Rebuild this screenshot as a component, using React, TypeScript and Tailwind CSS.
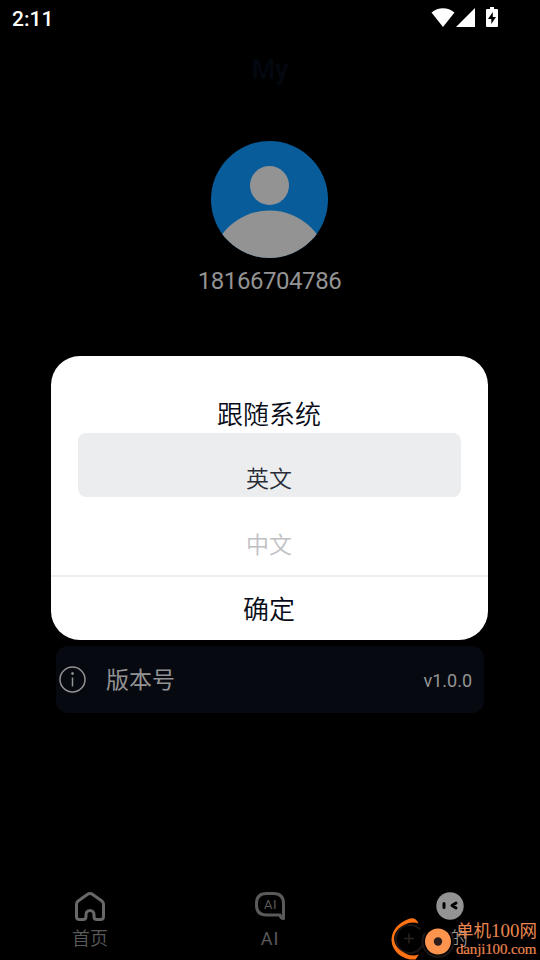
import { useState } from 'react'

const languages = [
  { label: '跟随系统', className: 'h-[65px] text-[26px] text-[#080c18]' },
  { label: '英文', className: 'h-[66px] text-[23px] text-[#292d38]' },
  { label: '中文', className: 'h-[65px] text-[23px] text-[#bfc0c3]' },
]

function StatusBar() {
  return (
    <header className="flex h-9 shrink-0 items-center justify-between pl-3 pr-[42px] text-white">
      <span className="pt-0.5 text-[21px] font-medium leading-6">2:11</span>
      <div className="flex items-center">
        <svg width="24" height="20" viewBox="0 0 24 20" fill="currentColor">
          <path d="M.5 4.500C7-1.200 17-1.200 23.500 4.500L12 19Z" />
        </svg>
        <svg className="ml-px" width="20" height="20" viewBox="0 0 20 20" fill="currentColor">
          <path d="M19 0v19H0Z" />
        </svg>
        <svg className="-mt-0.5 ml-[10px]" width="12" height="20" viewBox="0 0 12 20" fill="currentColor">
          <path d="M4 0h4v2h3q1 0 1 1v16q0 1-1 1H1q-1 0-1-1V3q0-1 1-1h3Z" />
          <path fill="#000" d="M6.800 5v5H10l-4.700 7v-5H2Z" />
        </svg>
      </div>
    </header>
  )
}

function Avatar() {
  return (
    <svg className="mr-0.5 mt-[54px] shrink-0" width="117" height="117" viewBox="0 0 117 117">
      <defs>
        <clipPath id="avatar">
          <circle cx="58.5" cy="58.5" r="58.5" />
        </clipPath>
      </defs>
      <g clipPath="url(#avatar)">
        <rect width="117" height="117" fill="#085c99" />
        <circle cx="58.5" cy="44.5" r="19.5" fill="#939393" />
        <circle cx="58.5" cy="128.5" r="59" fill="#939393" />
      </g>
    </svg>
  )
}

function HomeIcon() {
  return (
    <svg width="32" height="32" viewBox="0 0 32 32" fill="none" stroke="#686868" strokeWidth="3" strokeLinejoin="round">
      <path d="M2.500 14.200q0-2 1.600-3.200L13.300 4.500q2.700-1.900 5.400 0L27.900 11q1.600 1.200 1.600 3.200V26.500q0 3-3 3h-3.500q-3 0-3-3V24.500a4 4 0 0 0-8 0v2q0 3-3 3H5.500q-3 0-3-3Z" />
    </svg>
  )
}

function ChatIcon() {
  return (
    <svg width="32" height="32" viewBox="0 0 32 32" fill="none">
      <path
        d="M12.500 3.500h7q10 0 10 10V28.500q-2.500 0-3.500-3.500H12.500q-10 0-10-10v-1.500q0-10 10-10Z"
        stroke="#5a5a5a"
        strokeWidth="3"
        strokeLinejoin="round"
      />
      <text x="16.500" y="19" textAnchor="middle" fill="#5a5a5a" fontSize="13" letterSpacing=".5">
        AI
      </text>
    </svg>
  )
}

function FaceIcon() {
  return (
    <svg width="32" height="32" viewBox="0 0 32 32">
      <circle cx="16" cy="16" r="13.700" fill="#939393" />
      <path d="M10 13.500v4M22 13l-4 2.500 4 2.500" fill="none" stroke="#000" strokeWidth="3" strokeLinejoin="round" strokeLinecap="round" />
    </svg>
  )
}

function TabBar() {
  return (
    <nav className="grid h-[70px] shrink-0 grid-cols-3 text-lg leading-[30px] text-[#5a5a5a]">
      <div className="flex flex-col items-center">
        <HomeIcon />
        <span className="pt-0.5 font-[350]">首页</span>
      </div>
      <div className="flex flex-col items-center">
        <ChatIcon />
        <span className="pt-0.5 tracking-[1px]">AI</span>
      </div>
      <div className="flex flex-col items-center text-[#939393]">
        <FaceIcon />
        <span className="pt-0.5 font-[350]">我的</span>
      </div>
    </nav>
  )
}

function LanguageDialog() {
  const [selected, setSelected] = useState(1)

  return (
    <div role="dialog" className="absolute left-[51px] top-[356px] flex h-[284px] w-[437px] flex-col overflow-hidden rounded-[29px] bg-white font-[350]">
      <div className="flex h-[219px] flex-col px-[27px] pt-6">
        {languages.map((language, i) => (
          <button
            key={language.label}
            onClick={() => setSelected(i)}
            className={`relative flex w-full shrink-0 items-center justify-center ${language.className}`}
          >
            {selected === i && <span className="absolute inset-x-0 -top-3 h-16 rounded-lg bg-[#ecedef]" />}
            <span className="relative pr-px pt-[5px]">{language.label}</span>
          </button>
        ))}
      </div>
      <button className="flex flex-1 items-center justify-center border-t-2 border-[#efefef] pr-px pt-[3px] text-[26px] text-[#080c18]">
        确定
      </button>
    </div>
  )
}

function Watermark() {
  return (
    <div className="absolute left-[388px] top-[915px] flex h-[45px] w-[152px]">
      <svg className="shrink-0" width="68" height="45" viewBox="0 0 68 45" fill="none">
        <circle cx="50" cy="26" r="15.500" fill="#000" />
        <path d="M32 14.500A14 14 0 1 0 34.500 30" stroke="#1d1616" strokeWidth="2" />
        <path d="M16 23.500h10M21 18.500v10" stroke="#2b2220" strokeWidth="1.500" />
        <path d="M30.500 8.500Q28 2.500 22 3.500C11 7 3.500 15 3.500 25C4 36 12 42 22 44.500h5.500l3.500-5q-5 1.500-10 .5C11.500 36 6 31 6 23 7 15 13 10.500 21 8q5-1 9.500.5Z" fill="#ff7213" />
        <path d="M37 18a15.500 15.500 0 1 0 25-1.500" stroke="#1d1616" strokeWidth="2" />
        <circle cx="50" cy="26.500" r="13" fill="#ff944f" />
        <circle cx="50" cy="26.500" r="4.200" fill="#2b1d1a" />
      </svg>
      <div className="flex flex-col whitespace-nowrap font-['Liberation_Serif','Noto_Sans_CJK_SC',serif] text-[#e98650]">
        <span className="flex h-[25px] items-baseline text-[17.5px] leading-[31px]">
          单机<span className="text-[19px]">100</span>网
        </span>
        <span className="text-[15px] leading-[18px] tracking-[-.15px] [-webkit-text-stroke:.2px]">danji100.com</span>
      </div>
    </div>
  )
}

export default function App() {
  return (
    <div className="relative flex h-[960px] w-[540px] flex-col overflow-hidden bg-black font-[Roboto,'Noto_Sans_CJK_SC',sans-serif]">
      <StatusBar />
      <main className="flex flex-1 flex-col items-center">
        <h1 className="mt-[17px] h-[34px] text-[27px] font-bold leading-[34px] text-[#03070e]">My</h1>
        <Avatar />
        <p className="mt-[7px] pr-px text-2xl leading-8 tracking-[-.45px] text-[#939393]">18166704786</p>
        <div className="mt-[349px] flex h-[67px] w-[428px] items-center rounded-xl bg-[#060910] pl-[3px] pr-3 text-[#939393]">
          <svg width="27" height="27" viewBox="0 0 27 27" fill="none" stroke="currentColor" strokeWidth="1.500">
            <circle cx="13.500" cy="13.500" r="12.500" />
            <path d="M13.500 11.500v9" />
            <circle cx="13.500" cy="7.500" r="1" fill="currentColor" strokeWidth="1" />
          </svg>
          <span className="ml-5 pt-1 text-[23px]">版本号</span>
          <span className="ml-auto pt-0.5 text-lg">v1.0.0</span>
        </div>
      </main>
      <TabBar />
      <LanguageDialog />
      <Watermark />
    </div>
  )
}
